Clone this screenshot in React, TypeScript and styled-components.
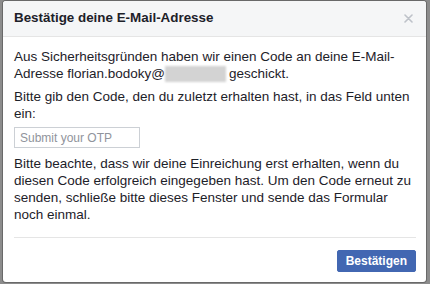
import React from 'react'
import styled, { createGlobalStyle } from 'styled-components'

const GlobalStyle = createGlobalStyle`
  html, body {
    margin: 0;
    padding: 0;
    background: #8c8c8c;
  }
  body {
    font-family: 'Liberation Sans', Arial, Helvetica, sans-serif;
    -webkit-font-smoothing: antialiased;
  }
`

const Page = styled.div`
  width: 430px;
  height: 284px;
  padding: 1px 4px 2px 3px;
  box-sizing: border-box;
`

const Dialog = styled.div`
  height: 100%;
  background: #fff;
  border-radius: 3px;
  box-shadow: 0 0 0 1px rgba(0, 0, 0, 0.25);
  display: flex;
  flex-direction: column;
  overflow: hidden;
  color: #1d2129;
`

const Header = styled.div`
  height: 36px;
  box-sizing: border-box;
  background: #f5f6f7;
  border-bottom: 1px solid #e5e5e5;
  display: flex;
  align-items: center;
  justify-content: space-between;
  padding: 0 10px 1px 11px;
`

const Title = styled.h1`
  margin: 0;
  font-size: 13.4px;
  font-weight: bold;
  line-height: 18px;
  color: #1d2129;
`

const Close = styled.button`
  border: none;
  background: none;
  padding: 0;
  width: 16px;
  height: 16px;
  display: flex;
  align-items: center;
  justify-content: center;
  cursor: pointer;
`

const Body = styled.div`
  padding: 11px 9px 0 11px;
  font-size: 13.5px;
  line-height: 17px;
`

const Paragraph = styled.p`
  margin: 0 0 6px 0;
`

const Blur = styled.span`
  display: inline-block;
  width: 61px;
  height: 16px;
  vertical-align: -4px;
  background: #d3d3d3;
  filter: blur(1px);
  margin-right: 3px;
`

const Input = styled.input`
  display: block;
  width: 126px;
  height: 21px;
  box-sizing: border-box;
  margin: -1px 0 7px 0;
  border: 1px solid #ccd0d5;
  padding: 0 5px;
  font-family: inherit;
  font-size: 12px;
  color: #1d2129;
  outline: none;

  &::placeholder {
    color: #90949c;
  }
`

const Footer = styled.div`
  margin: auto 10px 0 11px;
  padding: 12px 0 10px 0;
  border-top: 1px solid #e5e5e5;
  display: flex;
  justify-content: flex-end;
`

const Button = styled.button`
  height: 22px;
  padding: 0 8px;
  background: #4267b2;
  border: 1px solid #4267b2;
  border-radius: 2px;
  color: #fff;
  font-family: inherit;
  font-size: 12px;
  font-weight: bold;
  cursor: pointer;
`

const BodyWrap = styled.div`
  flex: 1;
  display: flex;
  flex-direction: column;
`

export default function App() {
  return (
    <>
      <GlobalStyle />
      <Page>
        <Dialog>
          <Header>
            <Title>Bestätige deine E-Mail-Adresse</Title>
            <Close aria-label="Schließen">
              <svg width="9" height="9" viewBox="0 0 9 9">
                <path d="M1 1 L8 8 M8 1 L1 8" stroke="#bec2c9" strokeWidth="1.6" strokeLinecap="round" />
              </svg>
            </Close>
          </Header>
          <BodyWrap>
            <Body>
              <Paragraph>
                Aus Sicherheitsgründen haben wir einen Code an deine E-Mail-Adresse florian.bodoky@
                <Blur />
                geschickt.
              </Paragraph>
              <Paragraph>Bitte gib den Code, den du zuletzt erhalten hast, in das Feld unten ein:</Paragraph>
              <Input placeholder="Submit your OTP" />
              <Paragraph>
                Bitte beachte, dass wir deine Einreichung erst erhalten, wenn du diesen Code erfolgreich
                eingegeben hast. Um den Code erneut zu senden, schließe bitte dieses Fenster und sende das
                Formular noch einmal.
              </Paragraph>
            </Body>
            <Footer>
              <Button>Bestätigen</Button>
            </Footer>
          </BodyWrap>
        </Dialog>
      </Page>
    </>
  )
}
